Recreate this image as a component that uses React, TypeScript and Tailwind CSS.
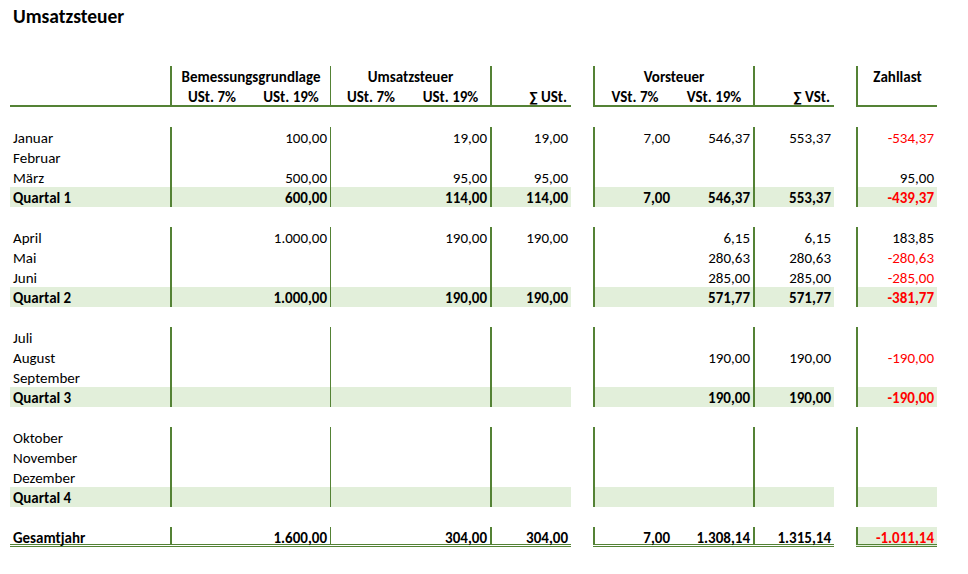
import React from "react";

type RowKind = "data" | "quarter" | "total";
type Vals = {
  b7?: string; b19?: string; u7?: string; u19?: string; su?: string;
  v7?: string; v19?: string; sv?: string; z?: string;
};

const rows: { label: string; kind: RowKind; v: Vals }[][] = [
  [
    { label: "Januar", kind: "data", v: { b19: "100,00", u19: "19,00", su: "19,00", v7: "7,00", v19: "546,37", sv: "553,37", z: "-534,37" } },
    { label: "Februar", kind: "data", v: {} },
    { label: "März", kind: "data", v: { b19: "500,00", u19: "95,00", su: "95,00", z: "95,00" } },
    { label: "Quartal 1", kind: "quarter", v: { b19: "600,00", u19: "114,00", su: "114,00", v7: "7,00", v19: "546,37", sv: "553,37", z: "-439,37" } },
  ],
  [
    { label: "April", kind: "data", v: { b19: "1.000,00", u19: "190,00", su: "190,00", v19: "6,15", sv: "6,15", z: "183,85" } },
    { label: "Mai", kind: "data", v: { v19: "280,63", sv: "280,63", z: "-280,63" } },
    { label: "Juni", kind: "data", v: { v19: "285,00", sv: "285,00", z: "-285,00" } },
    { label: "Quartal 2", kind: "quarter", v: { b19: "1.000,00", u19: "190,00", su: "190,00", v19: "571,77", sv: "571,77", z: "-381,77" } },
  ],
  [
    { label: "Juli", kind: "data", v: {} },
    { label: "August", kind: "data", v: { v19: "190,00", sv: "190,00", z: "-190,00" } },
    { label: "September", kind: "data", v: {} },
    { label: "Quartal 3", kind: "quarter", v: { v19: "190,00", sv: "190,00", z: "-190,00" } },
  ],
  [
    { label: "Oktober", kind: "data", v: {} },
    { label: "November", kind: "data", v: {} },
    { label: "Dezember", kind: "data", v: {} },
    { label: "Quartal 4", kind: "quarter", v: {} },
  ],
];

const G = "border-[#548235]";

function Num({ w, children, cls = "" }: { w: string; children?: React.ReactNode; cls?: string }) {
  return <div className={`${w} h-full text-right pr-[3px] whitespace-nowrap ${cls}`}>{children}</div>;
}

function Row({ label, kind, v }: { label: string; kind: RowKind; v: Vals }) {
  const fill = kind === "quarter" ? "bg-[#e2efda]" : "";
  const bold = kind !== "data" ? "font-bold" : "";
  const bottom = kind === "total" ? `border-b-[3px] border-double ${G}` : "";
  const zRed = v.z && v.z.startsWith("-") ? "text-[#ff0000]" : "";
  return (
    <div className={`flex h-[20px] leading-[23px] ${bold}`}>
      <div className={`flex w-[561px] ml-[10px] ${fill} ${bottom}`}>
        <div className="w-[160px] pl-[3px] whitespace-nowrap">{label}</div>
        <Num w={`w-[80px] border-l-2 ${G}`}>{v.b7}</Num>
        <Num w="w-[80px]">{v.b19}</Num>
        <Num w={`w-[80px] border-l ${G}`}>{v.u7}</Num>
        <Num w="w-[80px]">{v.u19}</Num>
        <Num w={`w-[81px] border-l-2 ${G}`}>{v.su}</Num>
      </div>
      <div className={`flex w-[241px] ml-[22px] ${fill} ${bottom}`}>
        <Num w={`w-[80px] border-l-2 ${G}`}>{v.v7}</Num>
        <Num w="w-[80px]">{v.v19}</Num>
        <Num w={`w-[81px] border-l-2 ${G}`}>{v.sv}</Num>
      </div>
      <div className={`flex w-[81px] ml-[22px] ${fill} ${bottom} ${kind === "total" ? "bg-[#e2efda]" : ""}`}>
        <Num w={`w-[81px] border-l-2 ${G}`} cls={zRed}>{v.z}</Num>
      </div>
    </div>
  );
}

export default function App() {
  return (
    <div
      className="w-[968px] h-[574px] bg-white text-black text-[15px] overflow-hidden"
      style={{ fontFamily: "Carlito, Calibri, Lato, 'Liberation Sans', sans-serif" }}
    >
      <div className="h-[30px] pl-[13px] pt-[4px] text-[19.5px] font-bold leading-[24px]">Umsatzsteuer</div>
      <div className="h-[36px]" />
      {/* header */}
      <div className="flex font-bold leading-[23px]">
        <div className={`flex w-[561px] ml-[10px] border-b-2 ${G}`}>
          <div className="w-[160px]" />
          <div className={`w-[160px] border-l-2 ${G}`}>
            <div className="h-[20px] text-center whitespace-nowrap">Bemessungsgrundlage</div>
            <div className="h-[19px] flex">
              <div className="w-[80px] text-center">USt. 7%</div>
              <div className="w-[78px] text-center">USt. 19%</div>
            </div>
          </div>
          <div className={`w-[160px] border-l ${G}`}>
            <div className="h-[20px] text-center">Umsatzsteuer</div>
            <div className="h-[19px] flex">
              <div className="w-[80px] text-center">USt. 7%</div>
              <div className="w-[79px] text-center">USt. 19%</div>
            </div>
          </div>
          <div className={`w-[81px] border-l-2 ${G}`}>
            <div className="h-[20px]" />
            <div className="h-[19px] text-right pr-[4px] whitespace-nowrap">∑ USt.</div>
          </div>
        </div>
        <div className={`flex w-[241px] ml-[22px] border-b-2 ${G}`}>
          <div className={`w-[160px] border-l-2 ${G}`}>
            <div className="h-[20px] text-center">Vorsteuer</div>
            <div className="h-[19px] flex">
              <div className="w-[80px] text-center">VSt. 7%</div>
              <div className="w-[78px] text-center">VSt. 19%</div>
            </div>
          </div>
          <div className={`w-[81px] border-l-2 ${G}`}>
            <div className="h-[20px]" />
            <div className="h-[19px] text-right pr-[4px] whitespace-nowrap">∑ VSt.</div>
          </div>
        </div>
        <div className={`flex w-[81px] ml-[22px] border-b-2 ${G}`}>
          <div className={`w-[81px] border-l-2 ${G}`}>
            <div className="h-[20px] text-center">Zahllast</div>
            <div className="h-[19px]" />
          </div>
        </div>
      </div>
      <div className="h-[20px]" />
      {rows.map((group, gi) => (
        <div key={gi}>
          {group.map((r) => (
            <Row key={r.label} {...r} />
          ))}
          <div className="h-[20px]" />
        </div>
      ))}
      <Row
        label="Gesamtjahr"
        kind="total"
        v={{ b19: "1.600,00", u19: "304,00", su: "304,00", v7: "7,00", v19: "1.308,14", sv: "1.315,14", z: "-1.011,14" }}
      />
    </div>
  );
}
